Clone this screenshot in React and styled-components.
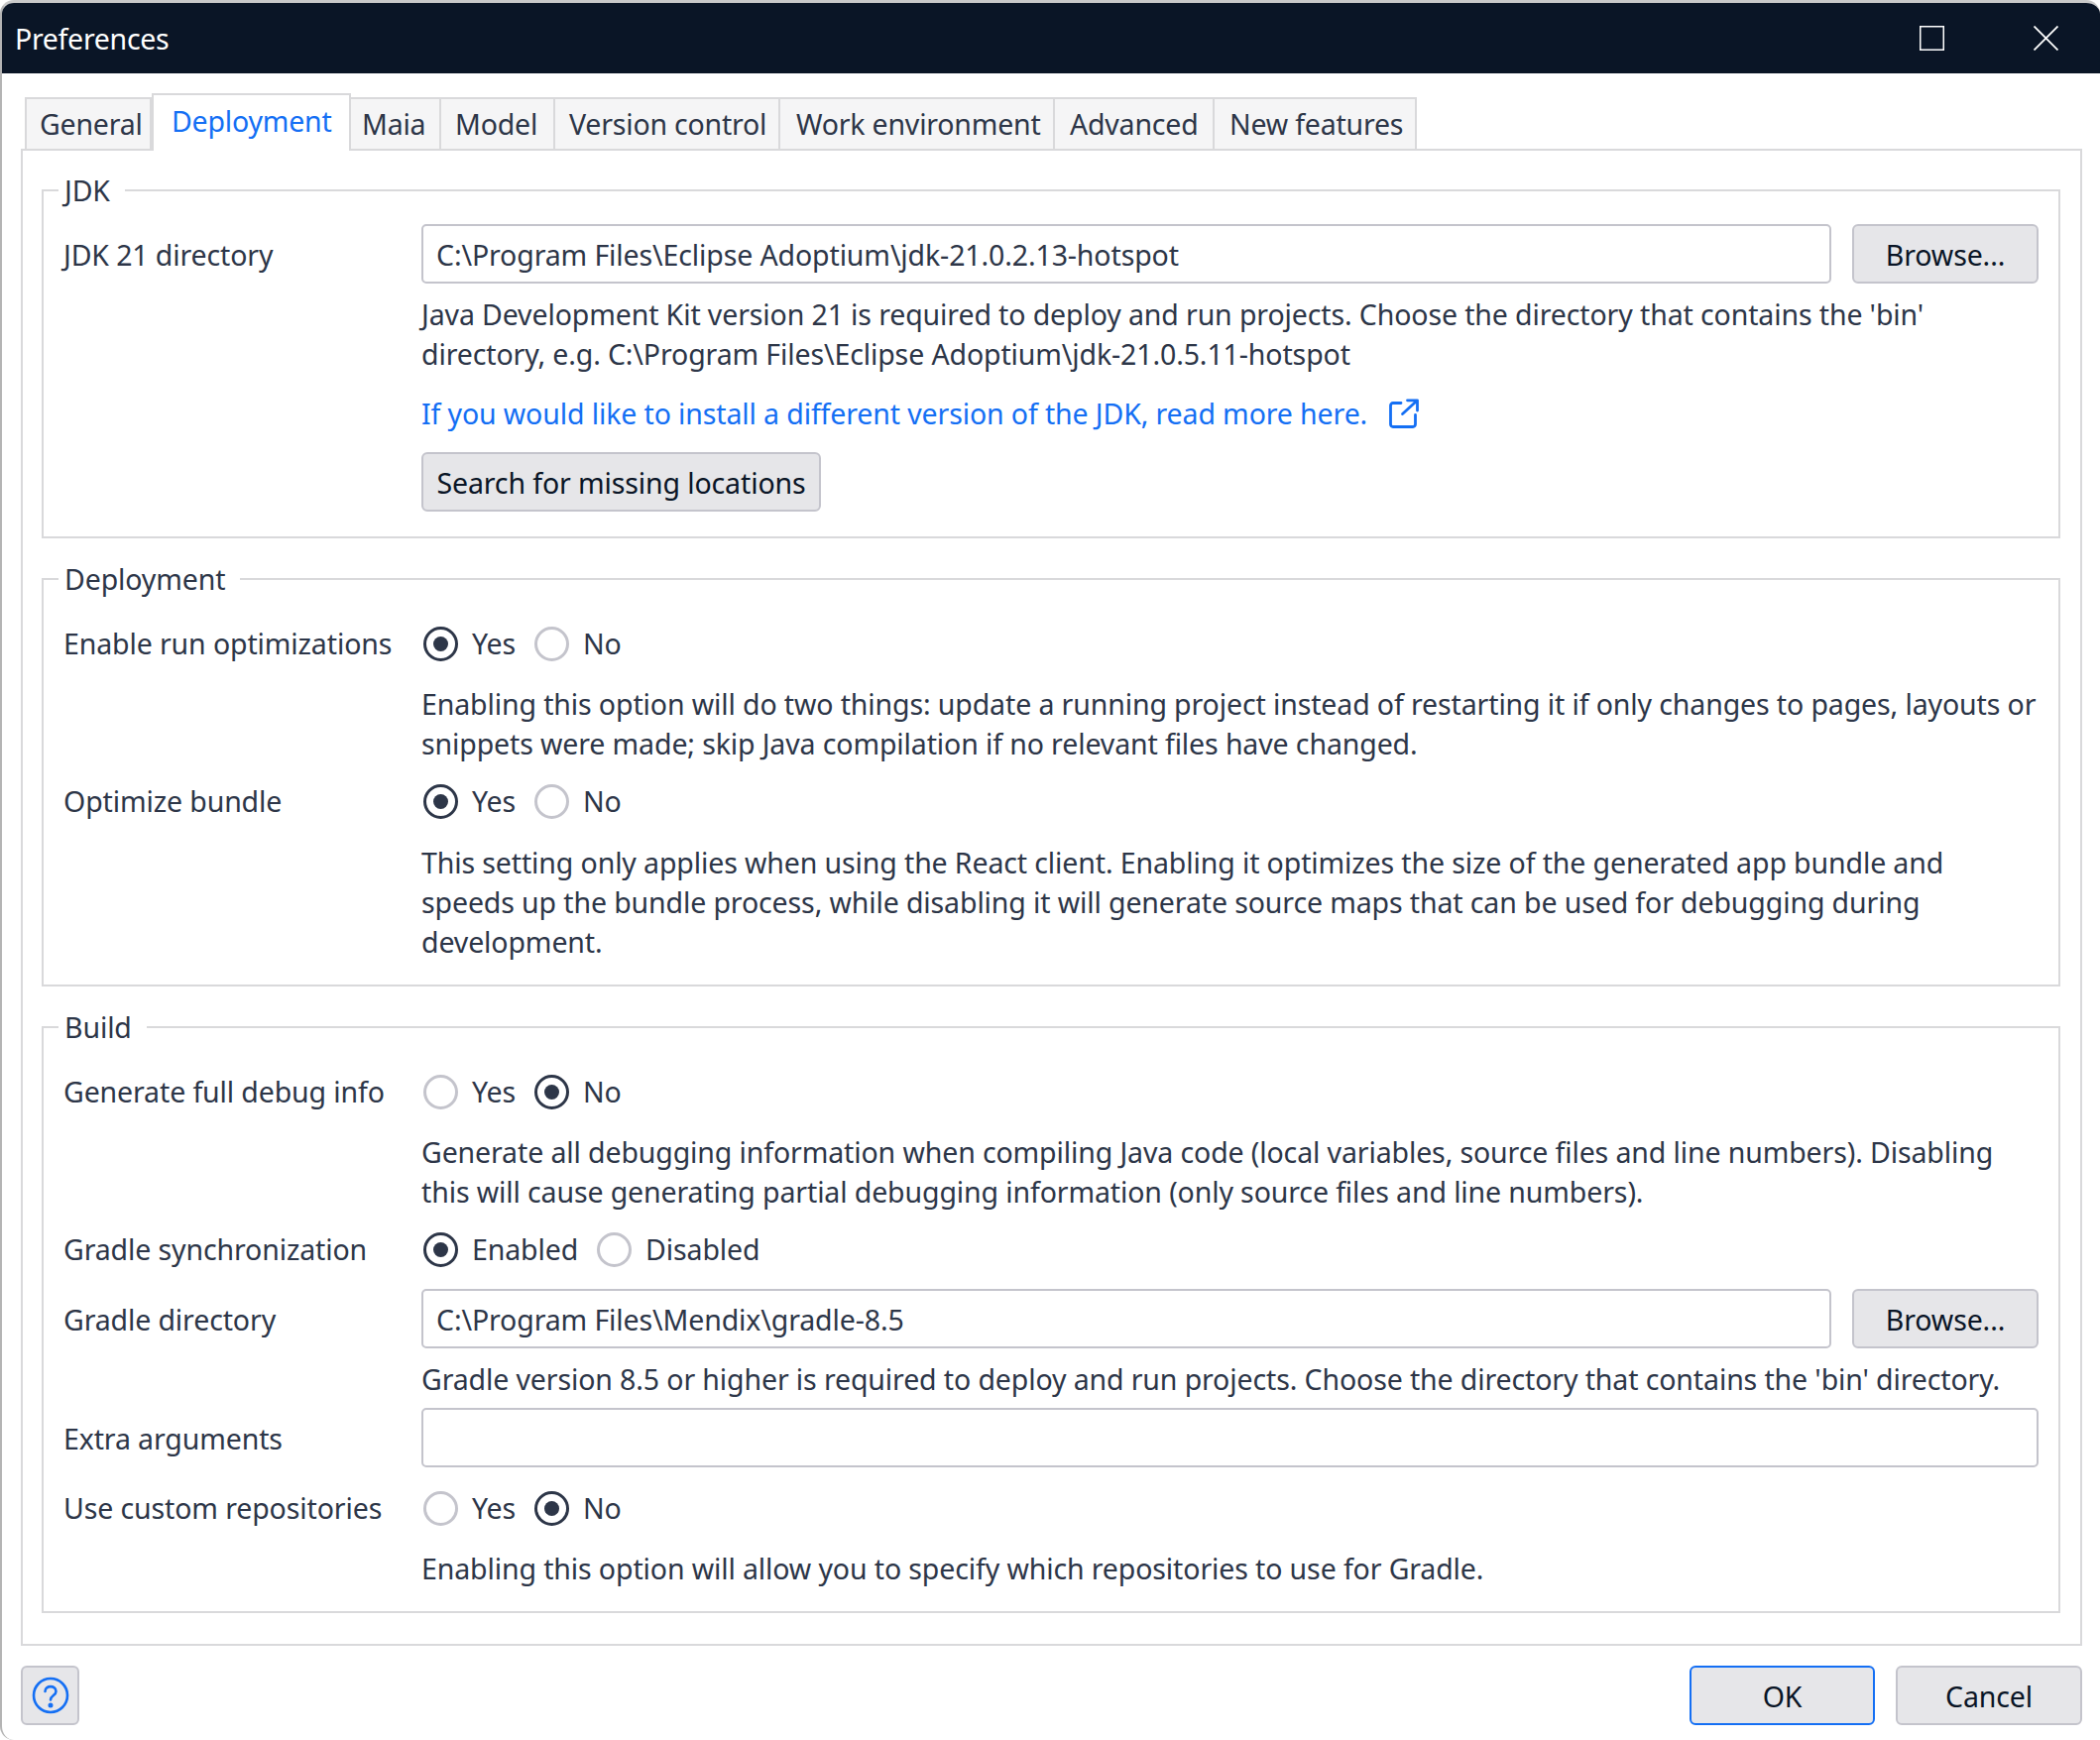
import React from 'react';
import styled, { createGlobalStyle } from 'styled-components';

const GlobalStyle = createGlobalStyle`
  html, body {
    margin: 0;
    padding: 0;
    background: #fff;
  }
  * {
    box-sizing: border-box;
  }
`;

const Window = styled.div`
  width: 2118px;
  height: 1755px;
  display: flex;
  flex-direction: column;
  background: #fff;
  border-top: 3px solid #c9c9c9;
  border-left: 2px solid #b4b4b4;
  border-radius: 14px;
  overflow: hidden;
  font-family: 'Noto Sans', 'Open Sans', sans-serif;
  font-size: 28.5px;
  letter-spacing: -0.12px;
  line-height: 40px;
  color: #2d3648;
`;

const TitleBar = styled.div`
  flex: none;
  height: 71px;
  display: flex;
  align-items: center;
  padding: 0 42px 0 13px;
  background: #0a1526;
  color: #fff;
`;

const Title = styled.div`
  flex: 1;
  letter-spacing: -0.3px;
`;

const WinButton = styled.svg`
  display: block;
  width: 25px;
  height: 25px;
  margin-left: ${(p) => p.$gap}px;
`;

const Body = styled.div`
  flex: 1;
  padding: 20px 18px 0 19px;
`;

const Tabs = styled.div`
  display: flex;
  align-items: flex-end;
  height: 56px;
  padding-left: 4px;
`;

const Tab = styled.div`
  position: relative;
  flex: none;
  width: ${(p) => p.$width}px;
  height: ${(p) => (p.$active ? 58 : 52)}px;
  margin-bottom: ${(p) => (p.$active ? -2 : 0)}px;
  padding: ${(p) => (p.$active ? 6 : 5)}px 0 0 ${(p) => p.$pad}px;
  background: ${(p) => (p.$active ? '#fff' : '#f5f5f6')};
  border: 2px solid #d9d9db;
  border-bottom: none;
  border-left-width: ${(p) => (p.$first || p.$active ? 2 : 0)}px;
  color: ${(p) => (p.$active ? '#146ff4' : '#2d3648')};
  letter-spacing: -0.2px;
  white-space: nowrap;
`;

const Panel = styled.div`
  height: 1510px;
  padding: 20px 20px 32px 19px;
  border: 2px solid #d9d9db;
`;

const Group = styled.fieldset`
  min-width: 0;
  margin: ${(p) => p.$top}px 0 0;
  padding: 0 20px ${(p) => p.$bottom}px;
  border: 2px solid #d9d9db;
`;

const Legend = styled.legend`
  margin-left: -5px;
  padding: 0 15px 0 6px;
  line-height: 40px;
`;

const Row = styled.div`
  display: grid;
  grid-template-columns: 361px 1fr;
  margin-top: ${(p) => p.$top}px;
`;

const Label = styled.div`
  padding-top: ${(p) => (p.$tall ? 1 : 0)}px;
  line-height: ${(p) => (p.$tall ? 60 : 40)}px;
  white-space: nowrap;
`;

const FieldRow = styled.div`
  display: flex;
  gap: 21px;
`;

const Input = styled.div`
  flex: 1;
  height: 60px;
  padding: 1px 13px 0;
  background: #fff;
  border: 2px solid #c4c4cc;
  border-radius: 5px;
  line-height: 56px;
  white-space: nowrap;
`;

const Button = styled.button`
  flex: none;
  width: ${(p) => p.$width}px;
  height: 60px;
  padding: 2px 0 0;
  background: #e6e6e9;
  border: 2px solid ${(p) => (p.$primary ? '#146ff4' : '#c4c4cc')};
  border-radius: 6px;
  font: inherit;
  letter-spacing: inherit;
  color: #0a1526;
  display: flex;
  align-items: center;
  justify-content: center;
`;

const Help = styled.div`
  margin-top: ${(p) => p.$top}px;
  white-space: nowrap;
`;

const HelpLink = styled.a`
  display: flex;
  align-items: center;
  margin-top: 20px;
  color: #146ff4;
`;

const LinkIcon = styled.svg`
  display: block;
  width: 30px;
  height: 30px;
  margin-left: 22px;
`;

const SearchRow = styled.div`
  margin-top: 19px;
`;

const Radios = styled.div`
  display: flex;
  align-items: center;
  height: 40px;
  padding-left: 2px;
`;

const RadioItem = styled.label`
  display: flex;
  align-items: center;
  margin-right: 19px;
  line-height: 38px;
`;

const Circle = styled.span`
  display: flex;
  align-items: center;
  justify-content: center;
  width: 35px;
  height: 35px;
  margin-right: 14px;
  border: 3px solid ${(p) => (p.$on ? '#2d3648' : '#c4c4cc')};
  border-radius: 50%;

  &::after {
    content: '';
    display: ${(p) => (p.$on ? 'block' : 'none')};
    width: 15px;
    height: 15px;
    border-radius: 50%;
    background: #2d3648;
  }
`;

const Footer = styled.div`
  display: flex;
  align-items: center;
  justify-content: space-between;
  margin-top: 20px;
`;

const FooterActions = styled.div`
  display: flex;
  gap: 21px;
`;

const HelpIcon = styled.svg`
  display: block;
  width: 38px;
  height: 38px;
  margin-top: -2px;
`;

function Radio({ on, children }) {
  return (
    <RadioItem>
      <Circle $on={on} />
      {children}
    </RadioItem>
  );
}

const tabs = [
  ['General', 128, 13],
  ['Deployment', 201, 18],
  ['Maia', 91, 11],
  ['Model', 115, 14],
  ['Version control', 227, 14],
  ['Work environment', 277, 16],
  ['Advanced', 161, 15],
  ['New features', 204, 15],
];

export default function App() {
  return (
    <Window>
      <GlobalStyle />
      <TitleBar>
        <Title>Preferences</Title>
        <WinButton viewBox="0 0 25 25" $gap={0}>
          <rect x="0.75" y="0.75" width="23.5" height="23.5" fill="none" stroke="#fff" strokeWidth="1.5" />
        </WinButton>
        <WinButton viewBox="0 0 25 25" $gap={90}>
          <path d="M0.5 0.5 L24.5 24.5 M24.5 0.5 L0.5 24.5" fill="none" stroke="#fff" strokeWidth="1.8" />
        </WinButton>
      </TitleBar>
      <Body>
        <Tabs>
          {tabs.map(([label, width, pad], i) => (
            <Tab key={label} $width={width} $pad={pad} $first={i === 0} $active={label === 'Deployment'}>{label}</Tab>
          ))}
        </Tabs>
        <Panel>
          <Group $top={0} $bottom={25}>
            <Legend>JDK</Legend>
            <Row $top={14}>
              <Label $tall>JDK 21 directory</Label>
              <div>
                <FieldRow>
                  <Input>C:\Program Files\Eclipse Adoptium\jdk-21.0.2.13-hotspot</Input>
                  <Button $width={188}>Browse...</Button>
                </FieldRow>
                <Help $top={11}>
                  Java Development Kit version 21 is required to deploy and run projects. Choose the directory that contains the 'bin'<br />
                  directory, e.g. C:\Program Files\Eclipse Adoptium\jdk-21.0.5.11-hotspot
                </Help>
                <HelpLink>
                  If you would like to install a different version of the JDK, read more here.
                  <LinkIcon viewBox="0 0 30 30" fill="none" stroke="#146ff4" strokeWidth="2.8" strokeLinecap="round" strokeLinejoin="round">
                    <path d="M12 4.5 H4 A2.5 2.5 0 0 0 1.5 7 V26 A2.5 2.5 0 0 0 4 28.5 H24 A2.5 2.5 0 0 0 26.5 26 V16.5" />
                    <path d="M18.5 1.8 H28.5 V12 M28 2.3 L13.5 15.5" />
                  </LinkIcon>
                </HelpLink>
                <SearchRow>
                  <Button $width={403}>Search for missing locations</Button>
                </SearchRow>
              </div>
            </Row>
          </Group>
          <Group $top={21} $bottom={23}>
            <Legend>Deployment</Legend>
            <Row $top={25}>
              <Label>Enable run optimizations</Label>
              <div>
                <Radios>
                  <Radio on>Yes</Radio>
                  <Radio>No</Radio>
                </Radios>
                <Help $top={21}>
                  Enabling this option will do two things: update a running project instead of restarting it if only changes to pages, layouts or<br />
                  snippets were made; skip Java compilation if no relevant files have changed.
                </Help>
              </div>
            </Row>
            <Row $top={18}>
              <Label>Optimize bundle</Label>
              <div>
                <Radios>
                  <Radio on>Yes</Radio>
                  <Radio>No</Radio>
                </Radios>
                <Help $top={22}>
                  This setting only applies when using the React client. Enabling it optimizes the size of the generated app bundle and<br />
                  speeds up the bundle process, while disabling it will generate source maps that can be used for debugging during<br />
                  development.
                </Help>
              </div>
            </Row>
          </Group>
          <Group $top={21} $bottom={23}>
            <Legend>Build</Legend>
            <Row $top={25}>
              <Label>Generate full debug info</Label>
              <div>
                <Radios>
                  <Radio>Yes</Radio>
                  <Radio on>No</Radio>
                </Radios>
                <Help $top={21}>
                  Generate all debugging information when compiling Java code (local variables, source files and line numbers). Disabling<br />
                  this will cause generating partial debugging information (only source files and line numbers).
                </Help>
              </div>
            </Row>
            <Row $top={18}>
              <Label>Gradle synchronization</Label>
              <Radios>
                <Radio on>Enabled</Radio>
                <Radio>Disabled</Radio>
              </Radios>
            </Row>
            <Row $top={20}>
              <Label $tall>Gradle directory</Label>
              <div>
                <FieldRow>
                  <Input>C:\Program Files\Mendix\gradle-8.5</Input>
                  <Button $width={188}>Browse...</Button>
                </FieldRow>
                <Help $top={11}>
                  Gradle version 8.5 or higher is required to deploy and run projects. Choose the directory that contains the 'bin' directory.
                </Help>
              </div>
            </Row>
            <Row $top={9}>
              <Label $tall>Extra arguments</Label>
              <Input />
            </Row>
            <Row $top={20}>
              <Label>Use custom repositories</Label>
              <div>
                <Radios>
                  <Radio>Yes</Radio>
                  <Radio on>No</Radio>
                </Radios>
                <Help $top={21}>
                  Enabling this option will allow you to specify which repositories to use for Gradle.
                </Help>
              </div>
            </Row>
          </Group>
        </Panel>
        <Footer>
          <Button $width={59}>
            <HelpIcon viewBox="0 0 38 38" fill="none" stroke="#146ff4" strokeWidth="2.6" strokeLinecap="round">
              <circle cx="19" cy="19" r="17" />
              <path d="M13.5 15 C13.5 8.5 24.5 8.5 24.5 15 C24.5 19 19 19 19 23.5" />
              <circle cx="19" cy="29" r="1.2" fill="#146ff4" />
            </HelpIcon>
          </Button>
          <FooterActions>
            <Button $width={187} $primary>OK</Button>
            <Button $width={188}>Cancel</Button>
          </FooterActions>
        </Footer>
      </Body>
    </Window>
  );
}
